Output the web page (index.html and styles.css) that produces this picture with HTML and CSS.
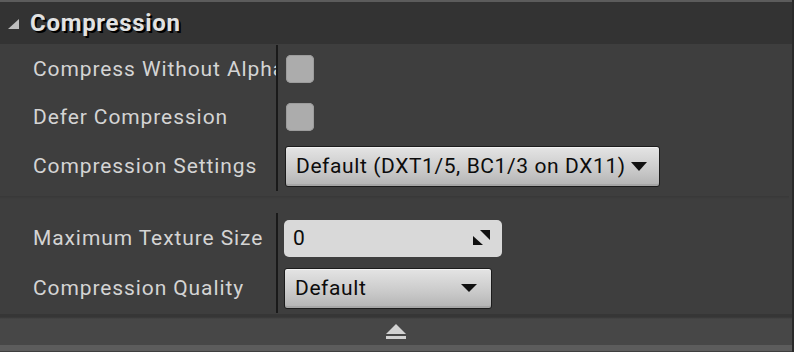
FILE: index.html
```html
<!DOCTYPE html>
<html>
<head>
<meta charset="utf-8">
<link rel="stylesheet" href="styles.css">
</head>
<body>
<div class="panel">
  <div class="topstrip"></div>
  <div class="header">
    <svg class="collapse" width="14" height="12" viewBox="0 0 14 12"><polygon points="13,1 13,11 2,11" fill="#bdbdbd"/></svg>
    <span class="title">Compression</span>
  </div>
  <div class="group g1">
    <div class="row r48">
      <div class="label">Compress Without Alpha</div>
      <div class="value"><div class="checkbox"></div></div>
    </div>
    <div class="row r48">
      <div class="label">Defer Compression</div>
      <div class="value"><div class="checkbox"></div></div>
    </div>
    <div class="row r50">
      <div class="label">Compression Settings</div>
      <div class="value">
        <div class="combo wide"><span>Default (DXT1/5, BC1/3 on DX11)</span><svg class="arrow" width="16" height="9" viewBox="0 0 16 9"><polygon points="0,0 16,0 8,9" fill="#111"/></svg></div>
      </div>
    </div>
  </div>
  <div class="sep"></div>
  <div class="group g2">
    <div class="row r50">
      <div class="label">Maximum Texture Size</div>
      <div class="value">
        <div class="numbox"><span>0</span>
          <svg class="resize" width="18" height="16" viewBox="0 0 18 16"><polygon points="7,0 17,0 17,10" fill="#111"/><polygon points="0,6 0,15 10,15" fill="#111"/></svg>
        </div>
      </div>
    </div>
    <div class="row r50">
      <div class="label">Compression Quality</div>
      <div class="value">
        <div class="combo narrow"><span>Default</span><svg class="arrow" width="16" height="8" viewBox="0 0 16 8"><polygon points="0,0 16,0 8,8" fill="#111"/></svg></div>
      </div>
    </div>
  </div>
  <div class="footer">
    <svg width="20" height="16" viewBox="0 0 20 16"><polygon points="10,0 20,10 0,10" fill="#d2d2d2"/><rect x="0" y="12" width="20" height="3" fill="#d2d2d2"/></svg>
  </div>
  <div class="bottomstrip"></div>
</div>
</body>
</html>
```
FILE: styles.css
```css
html, body {
  margin: 0;
  padding: 0;
  background: #3e3e3e;
}
body {
  width: 794px;
  height: 352px;
  overflow: hidden;
  font-family: Roboto, "Liberation Sans", sans-serif;
}
.panel {
  width: 792px;
  height: 352px;
  border-right: 2px solid #2a2a2a;
  display: flex;
  flex-direction: column;
  background: #3e3e3e;
}
.topstrip {
  height: 2px;
  background: #5c5c5c;
}
.header {
  height: 42px;
  background: #333333;
  display: flex;
  align-items: center;
  padding-left: 6px;
  gap: 10px;
}
.collapse {
  margin-top: 2px;
}
.title {
  font-weight: bold;
  font-size: 24px;
  letter-spacing: 0.7px;
  color: #e2e2e2;
  text-shadow: 2px 2px 0 #000;
}
.group {
  display: flex;
  flex-direction: column;
}
.g1 {
  padding-top: 1px;
}
.row {
  display: flex;
  align-items: center;
}
.r48 { height: 48px; }
.r50 { height: 50px; }
.label {
  width: 243px;
  padding-left: 33px;
  height: 100%;
  display: flex;
  align-items: center;
  border-right: 2px solid #1a1a1a;
  color: #d4d4d4;
  font-size: 21px;
  letter-spacing: 0.9px;
  white-space: nowrap;
  overflow: hidden;
}
.value {
  padding-left: 8px;
  display: flex;
  align-items: center;
}
.checkbox {
  width: 28px;
  height: 28px;
  border-radius: 5px;
  background: #acacac;
  box-shadow: inset 0 0 0 1px #9c9c9c;
}
.combo {
  box-sizing: border-box;
  height: 41px;
  border: 1px solid #1c1c1c;
  border-radius: 3px;
  background: linear-gradient(#e4e4e4, #c9c9c9 60%, #b3b3b3);
  box-shadow: inset 0 1px 0 #f2f2f2, inset 0 -2px 0 #a5a5a5;
  display: flex;
  align-items: center;
  padding-left: 10px;
  color: #0c0c0c;
  font-size: 21px;
  letter-spacing: 0.6px;
}
.combo.wide {
  width: 375px;
  margin-left: -1px;
}
.combo.wide .arrow {
  margin-left: 5px;
}
.combo.narrow {
  width: 208px;
  margin-left: -2px;
  justify-content: space-between;
  padding-right: 14px;
}
.numbox {
  box-sizing: border-box;
  width: 218px;
  height: 37px;
  margin-left: -2px;
  border-radius: 5px;
  background: #d9d9d9;
  display: flex;
  align-items: center;
  justify-content: space-between;
  padding-left: 9px;
  padding-right: 11px;
  color: #0c0c0c;
  font-size: 21px;
}
.sep {
  width: 789px;
  height: 22px;
  box-sizing: border-box;
  padding-top: 5px;
  background-clip: content-box;
  background-image: linear-gradient(#262626 0, #2b2b2b 2px, #383838 5px, #3e3e3e 8px);
}
.footer {
  margin-top: 1px;
  height: 31px;
  background: linear-gradient(#363636 0, #363636 3px, #474747 5px, #474747 100%);
  display: flex;
  justify-content: center;
  align-items: flex-end;
  box-sizing: border-box;
  padding-bottom: 5px;
}
.bottomstrip {
  height: 6px;
  background: #5c5c5c;
}
```
